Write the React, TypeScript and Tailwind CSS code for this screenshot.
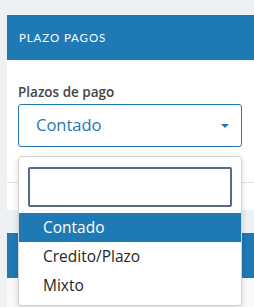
export default function App() {
  return (
    <div
      className="min-h-[307px] bg-[#eef1f3] pl-[7px] pt-[15px] overflow-hidden"
      style={{ fontFamily: '"Open Sans", "Liberation Sans", sans-serif' }}
    >
      {/* PLAZO PAGOS CARD */}
      <div className="bg-white">
        <div className="h-[45px] bg-[#1e79b5] flex items-center pl-[12px]">
          <h3
            className="text-[11.5px] text-white tracking-[0.9px] uppercase"
            style={{ fontFamily: 'Lato, "Open Sans", sans-serif' }}
          >
            Plazo Pagos
          </h3>
        </div>

        <div className="pl-[11px] pr-[12px] pt-[23px]">
          <label className="block text-[13.5px] font-semibold text-[#444444] leading-[18px]">
            Plazos de pago
          </label>

          <div className="relative mt-[3px] w-[224px]">
            <button className="w-full h-[43px] border border-[#1e79b5] rounded-[3px] bg-white flex items-center justify-between pl-[17px] pr-[12px]">
              <span className="text-[16.5px] text-[#2677b3]">Contado</span>
              <span className="w-0 h-0 border-l-[4px] border-r-[4px] border-t-[4px] border-l-transparent border-r-transparent border-t-[#1e79b5]" />
            </button>

            {/* DROPDOWN */}
            <div className="absolute left-0 top-[52px] w-[224px] bg-white border border-[#d4d4d4] rounded-[4px] shadow-[0_2px_6px_rgba(0,0,0,0.15)] z-10 pb-[5px]">
              <div className="px-[9px] pt-[10px] pb-[6px]">
                <input className="w-full h-[40px] border-2 border-[#566a8a] rounded-[2px] outline-none" />
              </div>
              <ul className="text-[15.5px] text-[#262626]">
                <li className="h-[29px] flex items-center pl-[24px] bg-[#1e79b5] text-white">Contado</li>
                <li className="h-[29px] flex items-center pl-[24px]">Credito/Plazo</li>
                <li className="h-[29px] flex items-center pl-[24px]">Mixto</li>
              </ul>
            </div>
          </div>
        </div>

        <div className="mt-[35px] border-t border-[#e4e4e4] h-[28px]" />
      </div>

      {/* NEXT CARD */}
      <div className="mt-[23px] bg-[#f9f9f9]">
        <div className="h-[45px] bg-[#1e79b5]" />
        <div className="h-[40px]" />
      </div>
    </div>
  );
}
